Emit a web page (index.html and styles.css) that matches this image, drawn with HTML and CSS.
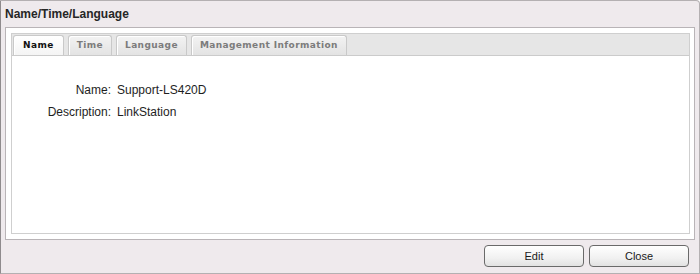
FILE: index.html
```html
<!DOCTYPE html>
<html>
<head>
<meta charset="utf-8">
<link rel="stylesheet" href="styles.css">
</head>
<body>
<div class="window">
  <div class="title">Name/Time/Language</div>
  <div class="panel">
    <div class="tabbox">
      <div class="tabs">
        <div class="tab active">Name</div>
        <div class="tab">Time</div>
        <div class="tab">Language</div>
        <div class="tab">Management Information</div>
      </div>
      <div class="content">
        <div class="row"><span class="label">Name:</span><span class="value">Support-LS420D</span></div>
        <div class="row"><span class="label">Description:</span><span class="value">LinkStation</span></div>
      </div>
    </div>
  </div>
  <div class="buttons">
    <button class="btn">Edit</button>
    <button class="btn">Close</button>
  </div>
</div>
</body>
</html>
```
FILE: styles.css
```css
html, body {
  margin: 0;
  padding: 0;
  background: #ffffff;
}
.window {
  width: 700px;
  height: 274px;
  box-sizing: border-box;
  border: 1px solid #b4b0b2;
  border-left-color: #8f8b8d;
  border-top-right-radius: 4px;
  background: #efeaed;
  font-family: "Liberation Sans", Arial, sans-serif;
  display: flex;
  flex-direction: column;
}
.title {
  height: 26px;
  line-height: 27px;
  padding-left: 4px;
  font-size: 12px;
  font-weight: bold;
  color: #262626;
}
.panel {
  margin: 0 4px;
  height: 213px;
  box-sizing: border-box;
  border: 1px solid #b9b4b7;
  background: #ffffff;
  padding: 5px 4px 5px 5px;
}
.tabbox {
  height: 100%;
  box-sizing: border-box;
  border: 1px solid #cfcfcf;
  display: flex;
  flex-direction: column;
}
.tabs {
  height: 20px;
  padding: 1px 0 0 1px;
  background: #e6e6e6;
  border-bottom: 1px solid #cbcbcb;
  display: flex;
  gap: 4px;
}
.tab {
  height: 20px;
  box-sizing: border-box;
  padding: 0 8px;
  border: 1px solid #c9c9c9;
  border-bottom: none;
  border-radius: 3px 3px 0 0;
  box-shadow: inset 1px 1px 0 #ffffff;
  background: linear-gradient(#f3f3f3, #e3e3e3);
  font-family: "DejaVu Sans", Verdana, sans-serif;
  font-size: 9px;
  letter-spacing: 0.4px;
  font-weight: bold;
  line-height: 19px;
  color: #7c7c7c;
}
.tab.active {
  background: linear-gradient(#ffffff, #f4f4f4);
  color: #111111;
  padding: 0 9px;
}
.content {
  flex: 1;
  padding-top: 23px;
  font-size: 12px;
  color: #1e1e1e;
}
.row {
  display: flex;
  height: 22px;
  line-height: 22px;
}
.label {
  width: 99px;
  text-align: right;
}
.value {
  margin-left: 6px;
}
.buttons {
  flex: 1;
  display: flex;
  justify-content: flex-end;
  align-items: flex-start;
  padding: 5px 10px 0 0;
  gap: 5px;
}
.btn {
  width: 100px;
  height: 22px;
  margin: 0;
  padding: 0;
  border: 1px solid #6a6a6a;
  border-radius: 4px;
  background: linear-gradient(#ffffff, #f1f1f1 60%, #e2e2e2);
  font-family: "Liberation Sans", Arial, sans-serif;
  font-size: 11px;
  color: #1a1a1a;
}
```
